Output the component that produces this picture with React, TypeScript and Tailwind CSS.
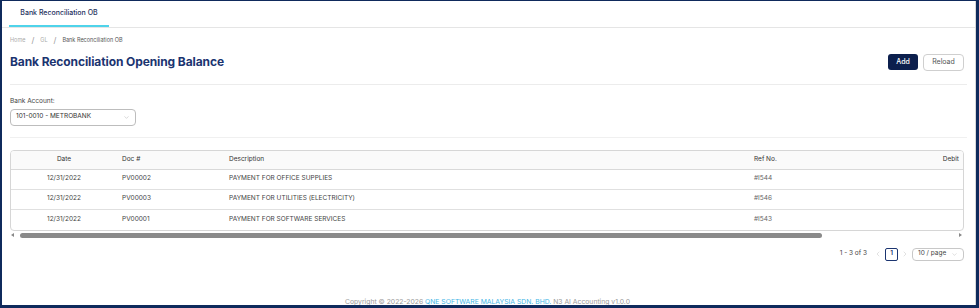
import { ChevronDown, ChevronLeft, ChevronRight } from "lucide-react"

const rows = [
  { date: "12/31/2022", doc: "PV00002", desc: "PAYMENT FOR OFFICE SUPPLIES", ref: "#I544" },
  { date: "12/31/2022", doc: "PV00003", desc: "PAYMENT FOR UTILITIES (ELECTRICITY)", ref: "#I546" },
  { date: "12/31/2022", doc: "PV00001", desc: "PAYMENT FOR SOFTWARE SERVICES", ref: "#I543" },
]

const cols = "grid grid-cols-[106px_107px_525px_110px_1fr]"

export default function App() {
  return (
    <div
      className="w-[979px] h-[308px] overflow-hidden bg-white border-[#0f2a5c] border-l-2 border-t border-r-[3px] border-b-[3px] text-[#333]"
      style={{ fontFamily: "Inter, 'Open Sans', sans-serif" }}
    >
      <div className="h-full border-r border-[#d9d9d9] flex flex-col">
        {/* tabs */}
        <div className="h-[27px] border-b border-[#e5e5e5] flex items-end pl-[7px]">
          <div className="w-[100px] h-[25px] flex items-center justify-center border-b-2 border-[#4fd3ea] text-[7px] text-[#1d2f5c] font-medium pb-px">
            Bank Reconciliation OB
          </div>
        </div>

        <div className="px-[8px] flex flex-col">
          {/* breadcrumb */}
          <div className="h-[22px] flex items-center gap-[6px] text-[5.5px] text-[#888] pt-[2px]">
            <span className="text-[#aaa]">Home</span>
            <span className="text-[8px] text-[#999]">/</span>
            <span className="text-[#aaa]">GL</span>
            <span className="text-[8px] text-[#999]">/</span>
            <span className="text-[#555]">Bank Reconciliation OB</span>
          </div>

          {/* title row */}
          <div className="h-[24px] flex items-center justify-between">
            <h1 className="text-[12px] font-bold text-[#1b3470] tracking-[-0.1px]">
              Bank Reconciliation Opening Balance
            </h1>
            <div className="flex items-center gap-[5px] pr-[3px]">
              <button className="h-[16px] w-[30px] rounded-[3px] bg-[#0c1f4d] text-white text-[7px] font-medium">
                Add
              </button>
              <button className="h-[17px] w-[41px] rounded-[4px] border border-[#cfcfcf] bg-white text-[#555] text-[7px]">
                Reload
              </button>
            </div>
          </div>

          <div className="mt-[10px] border-t border-[#ececec]" />

          {/* bank account */}
          <div className="mt-[13px] text-[6.5px] text-[#444] leading-none">Bank Account:</div>
          <div className="mt-[4px] w-[126px] h-[17px] rounded-[4px] border border-[#bdbdbd] flex items-center justify-between px-[5px] text-[6.5px] text-[#333]">
            <span>101-0010 - METROBANK</span>
            <ChevronDown size={7} className="text-[#aaa]" strokeWidth={1.5} />
          </div>

          <div className="mt-[11px] border-t border-[#f0f0f0]" />

          {/* table */}
          <div className="mt-[12px] w-[954px] border border-[#d6d6d6] rounded-[4px] overflow-hidden text-[6.5px]">
            <div className={`${cols} h-[19px] items-center bg-[#fafafa] border-b border-[#d9d9d9] text-[#333]`}>
              <div className="text-center">Date</div>
              <div className="pl-[5px]">Doc #</div>
              <div className="pl-[5px]">Description</div>
              <div className="pl-[5px]">Ref No.</div>
              <div className="text-right pr-[4px]">Debit</div>
            </div>
            {rows.map((r, i) => (
              <div
                key={r.doc}
                className={`${cols} h-[20px] items-center text-[#444] ${i < rows.length - 1 ? "border-b border-[#e0e0e0]" : ""}`}
              >
                <div className="text-center">{r.date}</div>
                <div className="pl-[5px]">{r.doc}</div>
                <div className="pl-[5px]">{r.desc}</div>
                <div className="pl-[5px] text-[#666]">{r.ref}</div>
                <div />
              </div>
            ))}
          </div>

          {/* scrollbar */}
          <div className="w-[954px] h-[9px] flex items-center gap-[2px]">
            <span className="w-0 h-0 border-y-[2.5px] border-y-transparent border-r-[3px] border-r-[#888] ml-[1px]" />
            <div className="ml-[4px] w-[802px] h-[5px] rounded-full bg-[#8a8a8a]" />
            <div className="flex-1" />
            <span className="w-0 h-0 border-y-[2.5px] border-y-transparent border-l-[3px] border-l-[#888] mr-[2px]" />
          </div>

          {/* pagination */}
          <div className="mt-[8px] w-[954px] flex items-center justify-end gap-[3px] text-[6.5px] text-[#444]">
            <span className="mr-[4px]">1 - 3 of 3</span>
            <ChevronLeft size={8} className="text-[#c4c4c4]" strokeWidth={1.5} />
            <span className="w-[13px] h-[13px] flex items-center justify-center border border-[#1b3470] rounded-[2px] text-[#1b3470] font-semibold">
              1
            </span>
            <ChevronRight size={8} className="text-[#c4c4c4]" strokeWidth={1.5} />
            <span className="w-[52px] h-[13px] flex items-center justify-between border border-[#c8c8c8] rounded-[4px] px-[5px]">
              <span>10 / page</span>
              <ChevronDown size={7} className="text-[#bbb]" strokeWidth={1.5} />
            </span>
          </div>
        </div>

        {/* footer */}
        <div className="mt-auto h-[6px] flex items-start justify-center text-[6.8px] leading-none text-[#999]">
          <span className="-ml-[2px]">
            Copyright © 2022-2026{" "}
            <span className="text-[#43b6e6]">QNE SOFTWARE MALAYSIA SDN. BHD.</span> N3 AI Accounting v1.0.0
          </span>
        </div>
      </div>
    </div>
  )
}
